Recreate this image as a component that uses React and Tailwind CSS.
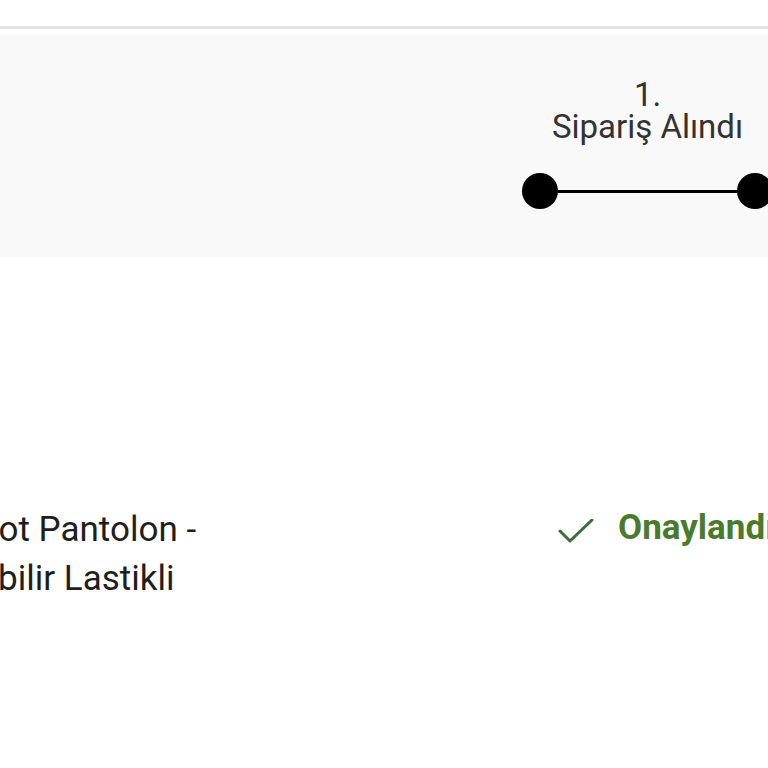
import React from "react";

const App = () => {
  return (
    <div className="w-[768px] h-[768px] overflow-hidden bg-white font-['Roboto',sans-serif] text-[#222]">
      {/* TOP BORDER */}
      <div className="h-[26px] bg-white"></div>
      <div className="h-[3px] bg-[#e4e4e4]"></div>
      <div className="h-[5px] bg-white"></div>

      {/* STEPPER BAND */}
      <div className="h-[223px] bg-[#f9f9f9] flex">
        <div className="ml-[522px] w-[300px] shrink-0 flex flex-col">
          <div className="mt-[45px] ml-[18px] w-[215px] text-center text-[33px] leading-[32px] text-[#333]">
            <div>1.</div>
            <div className="whitespace-nowrap">Sipariş Alındı</div>
          </div>
          <div className="mt-[30px] flex items-center">
            <div className="w-9 h-9 rounded-full bg-black shrink-0"></div>
            <div className="w-[179px] h-[3px] bg-black shrink-0"></div>
            <div className="w-9 h-9 rounded-full bg-black shrink-0"></div>
          </div>
        </div>
      </div>

      {/* PRODUCT ROW */}
      <div className="mt-[248px] flex items-start">
        <div className="w-[556px] shrink-0 text-[35px] leading-[49px] text-[#1e1e1e] whitespace-nowrap">
          <div className="ml-[-23px]">Kot Pantolon -</div>
          <div className="ml-[-137px]">Ayarlanabilir Lastikli</div>
        </div>
        <div className="flex items-start shrink-0">
          <svg
            className="mt-[14px] ml-[2px]"
            width="36"
            height="24"
            viewBox="0 0 36 24"
            fill="none"
            stroke="#3f6a3f"
            strokeWidth="3"
            strokeLinecap="round"
            strokeLinejoin="round"
          >
            <polyline points="2,12 12,22 34,1" />
          </svg>
          <span className="ml-[24px] text-[35px] leading-[46px] font-bold text-[#4a7a2c] whitespace-nowrap">
            Onaylandı
          </span>
        </div>
      </div>
    </div>
  );
};

export default App;
